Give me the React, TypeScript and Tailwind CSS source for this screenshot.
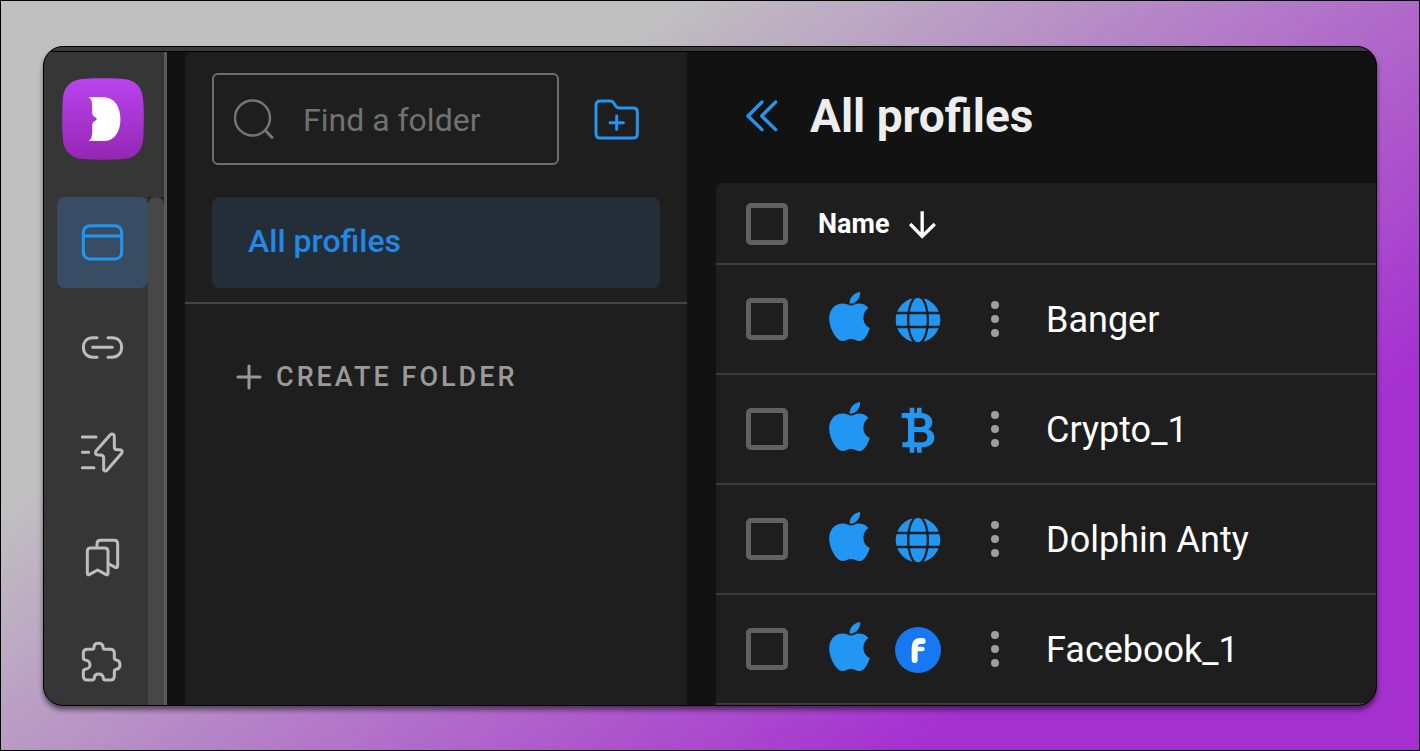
import type { ReactNode } from "react";

const navItems = [
  {
    label: "Browsers",
    active: true,
    viewBox: "132 540 135 135",
    icon: (
      <>
        <rect x="142" y="557" width="115" height="100" rx="20" />
        <path d="M142 588H257" />
      </>
    ),
  },
  {
    label: "Proxies",
    active: false,
    viewBox: "90 75 135 135",
    icon: (
      <path d="M141 113H129C110 113 100 126 100 142S110 172 129 172H141M174 113H186C205 113 215 126 215 142S205 172 186 172H174M128 142H187" />
    ),
  },
  {
    label: "Automation",
    active: false,
    viewBox: "90 390 135 135",
    icon: (
      <>
        <path d="M97 411H138M97 457H116M97 503H132" />
        <path d="M181 404Q186 400 191 404Q193 406 193 411V440Q193 449 202 449H209Q220 450 215 460L171 511Q165 516 161 510V474Q161 465 152 465H143Q133 463 138 453Z" />
      </>
    ),
  },
  {
    label: "Bookmarks",
    active: false,
    viewBox: "132 75 135 135",
    icon: (
      <>
        <path d="M154 190V124Q154 114 164 114H206Q216 114 216 124V190Q216 197 209 193L185 180L161 193Q154 197 154 190Z" />
        <path d="M183 112V102Q183 91 194 91H235Q245 91 245 102V168Q245 174 238 172L221 163" />
      </>
    ),
  },
  {
    label: "Extensions",
    active: false,
    viewBox: "132 390 135 135",
    icon: (
      <path d="M142 443V430Q142 418 154 418H168Q174 418 174 412C174 404 180 400 187 400C195 400 201 404 201 412Q201 418 207 418H223Q235 418 235 430V443Q235 449 241 450C248 451 252 457 252 464C252 471 248 477 241 478Q235 479 235 485V498Q235 510 223 510H208Q202 510 202 504C201 496 195 492 188 492C181 492 175 496 175 504Q174 510 168 510H154Q142 510 142 498V485Q142 479 148 478C156 477 162 471 162 464C162 457 156 451 148 450Q142 449 142 443Z" />
    ),
  },
];

const profiles = [
  { name: "Banger", site: "globe" },
  { name: "Crypto_1", site: "bitcoin" },
  { name: "Dolphin Anty", site: "globe" },
  { name: "Facebook_1", site: "facebook" },
] as const;

function Logo() {
  return (
    <svg viewBox="0 0 247 247" className="h-[82px] w-[82px]" aria-hidden>
      <defs>
        <linearGradient id="logo" x1="0" y1="0" x2="0" y2="1">
          <stop offset="0" stopColor="#b944ee" />
          <stop offset="1" stopColor="#9526b4" />
        </linearGradient>
      </defs>
      <path
        fill="url(#logo)"
        d="M72 2C100 0 147 0 175 2C222 4 243 25 245 72C247 100 247 147 245 175C243 222 222 243 175 245C147 247 100 247 72 245C25 243 4 222 2 175C0 147 0 100 2 72C4 25 25 4 72 2Z"
      />
      <path
        fill="#fff"
        d="M80 58H125C158 58 176 86 176 124S158 190 125 190H80C88 184 91 176 91 165V145C91 133 96 132 104 126V121C96 115 91 115 91 103V82C91 71 88 64 80 58Z"
      />
    </svg>
  );
}

function AppleIcon() {
  return (
    <svg viewBox="0 0 121 146" className="h-[49px] w-[41px] fill-[#2196f3]" aria-hidden>
      <path d="M66 40C58 40 52 34 40 34C18 34 0 52 0 78C0 106 20 145 40 146C50 146 54 140 65 140C76 140 80 146 92 146C104 146 116 124 121 107C110 103 102 92 102 77C102 64 108 54 117 48C110 38 98 34 90 34C79 34 72 40 66 40Z" />
      <path d="M92 0C94 18 80 36 61 35C59 20 72 2 92 0Z" />
    </svg>
  );
}

function GlobeIcon() {
  return (
    <svg viewBox="-69 -69 138 138" className="h-[46px] w-[46px]" aria-hidden>
      <circle r="67" fill="#2196f3" />
      <ellipse rx="33" ry="75" fill="#1e1e1e" />
      <ellipse rx="26" ry="67" fill="#2196f3" />
      <path d="M-69 -21H69M-69 21H69" stroke="#1e1e1e" strokeWidth="8" />
    </svg>
  );
}

function BitcoinIcon() {
  return (
    <svg viewBox="-20 -2 138 138" className="h-[46px] w-[46px] fill-[#2196f3]" aria-hidden>
      <path
        fillRule="evenodd"
        d="M0 16H24V0H38V16H46V0H60V16C80 18 92 28 92 44C92 54 87 61 79 65C91 69 98 77 98 90C98 108 84 118 60 119V135H46V119H38V135H24V119H2V104H12Q19 104 19 97V38Q19 31 12 31H0ZM38 31V58H54C66 58 71 54 71 45C71 35 66 31 54 31ZM38 73V104H58C71 104 77 98 77 88C77 78 71 73 58 73Z"
      />
    </svg>
  );
}

function FacebookIcon() {
  return (
    <svg viewBox="0 0 138 138" className="h-[46px] w-[46px]" aria-hidden>
      <circle cx="69" cy="69" r="69" fill="#1877f2" />
      <g fill="none" stroke="#fff" strokeLinecap="round">
        <path d="M59 99V62Q59 42 76 42H83" strokeWidth="18" />
        <path d="M62 66H82" strokeWidth="14" />
      </g>
    </svg>
  );
}

const siteIcons: Record<(typeof profiles)[number]["site"], ReactNode> = {
  globe: <GlobeIcon />,
  bitcoin: <BitcoinIcon />,
  facebook: <FacebookIcon />,
};

function Checkbox({ label }: { label: string }) {
  return (
    <input
      type="checkbox"
      aria-label={label}
      className="block h-[42px] w-[42px] appearance-none rounded-[5px] border-[5px] border-[#616161] checked:bg-[#2196f3]"
    />
  );
}

function Sidebar() {
  return (
    <aside className="flex shrink-0 flex-col border-r-[3px] border-[#5a5a5a] bg-[#363636] pt-[26px]">
      <a href="#home" aria-label="Home" className="ml-[18px]">
        <Logo />
      </a>
      <div className="mt-[37px] flex h-0 grow overflow-hidden pl-[13px]">
        <nav className="flex flex-col gap-[14px]">
          {navItems.map((item) => (
            <a
              key={item.label}
              href={`#${item.label.toLowerCase()}`}
              aria-label={item.label}
              className={`flex h-[91px] w-[91px] shrink-0 items-center justify-center rounded-lg ${
                item.active ? "bg-[#384d63] text-[#2196f3]" : "text-[#bdbdbd]"
              }`}
            >
              <svg
                viewBox={item.viewBox}
                className="h-[45px] w-[45px] fill-none stroke-current"
                strokeWidth="9"
                strokeLinecap="round"
                strokeLinejoin="round"
                aria-hidden
              >
                {item.icon}
              </svg>
            </a>
          ))}
        </nav>
        <div className="w-4 bg-[#262626]">
          <div className="h-full rounded-t-lg bg-[#474747]" />
        </div>
      </div>
    </aside>
  );
}

function FolderPanel() {
  return (
    <section className="ml-[18px] w-[502px] shrink-0 rounded-tl-lg bg-[#1e1e1e] pt-[21px]">
      <div className="flex items-center gap-[35px] pr-12 pl-[27px]">
        <label className="flex h-[92px] min-w-0 flex-1 items-center rounded-md border-2 border-[#6e6e6e] pl-5">
          <svg
            viewBox="0 0 40 40"
            className="h-10 w-10 shrink-0 fill-none stroke-[#757575]"
            strokeWidth="2.4"
            strokeLinecap="round"
            aria-hidden
          >
            <circle cx="18.500" cy="19" r="17.500" />
            <path d="M31.500 31.500L38 38.500" strokeWidth="3" />
          </svg>
          <input
            type="search"
            aria-label="Find a folder"
            placeholder="Find a folder"
            className="ml-[29px] w-full min-w-0 bg-transparent pt-0.5 text-[32px] leading-10 text-white outline-none placeholder:text-[#717171]"
          />
        </label>
        <button type="button" aria-label="New folder">
          <svg
            viewBox="191 113 135 129"
            className="h-[43px] w-[45px] fill-none stroke-[#2196f3]"
            strokeWidth="9"
            strokeLinecap="round"
            strokeLinejoin="round"
            aria-hidden
          >
            <path d="M197 135Q197 122 210 122H240Q247 122 250 128L256 137Q260 143 267 143H309Q321 143 321 155V220Q321 233 308 233H210Q197 233 197 220Z" />
            <path d="M259 167V207M239 187H279" />
          </svg>
        </button>
      </div>

      <div className="mt-8 border-b-2 border-[#454545] px-[27px] pb-[14px]">
        <a
          href="#all"
          className="flex h-[91px] items-center rounded-lg bg-[#242e38] pb-[3px] pl-9 text-[32px] font-medium text-[#2089e5]"
        >
          All profiles
        </a>
      </div>

      <button
        type="button"
        className="mt-[55px] ml-[51px] flex h-9 items-center gap-[14px] text-[27px] font-medium tracking-[3px] text-[#9a9a9a]"
      >
        <svg
          viewBox="0 0 26 26"
          className="h-[26px] w-[26px] stroke-current"
          strokeWidth="3"
          strokeLinecap="round"
          aria-hidden
        >
          <path d="M13 2V24M2 13H24" />
        </svg>
        CREATE FOLDER
      </button>
    </section>
  );
}

function ProfilesTable() {
  return (
    <div className="grow overflow-hidden rounded-tl-lg bg-[#1e1e1e]">
      <table className="w-full table-fixed border-separate border-spacing-0 text-left text-white">
        <colgroup>
          <col className="w-[102px]" />
          <col className="w-[148px]" />
          <col className="w-20" />
          <col />
        </colgroup>
        <thead>
          <tr>
            <th className="h-[82px] border-b-2 border-[#3a3a3a] p-0 pt-0.5 pl-[30px]">
              <Checkbox label="Select all profiles" />
            </th>
            <th colSpan={3} className="border-b-2 border-[#3a3a3a] p-0 pt-0.5">
              <button type="button" className="flex items-center gap-5 text-[27px] font-bold">
                Name
                <svg
                  viewBox="598 124 80 84"
                  className="mt-0.5 h-7 w-[27px] fill-none stroke-current"
                  strokeWidth="10"
                  aria-hidden
                >
                  <path d="M637 125V198M601 163L637 200L675 163" />
                </svg>
              </button>
            </th>
          </tr>
        </thead>
        <tbody>
          {profiles.map((profile) => (
            <tr key={profile.name}>
              <td className="h-[110px] border-b-2 border-[#3a3a3a] p-0 pl-[30px]">
                <Checkbox label={`Select ${profile.name}`} />
              </td>
              <td className="border-b-2 border-[#3a3a3a] p-0 pb-1 pl-[11px]">
                <div className="flex items-end gap-[25px]">
                  <div className="pb-0.5">
                    <AppleIcon />
                  </div>
                  {siteIcons[profile.site]}
                </div>
              </td>
              <td className="border-b-2 border-[#3a3a3a] p-0">
                <button
                  type="button"
                  aria-label={`Actions for ${profile.name}`}
                  className="flex w-[58px] flex-col items-center gap-[6px]"
                >
                  <span className="h-2 w-2 rounded-full bg-[#9e9e9e]" />
                  <span className="h-2 w-2 rounded-full bg-[#9e9e9e]" />
                  <span className="h-2 w-2 rounded-full bg-[#9e9e9e]" />
                </button>
              </td>
              <td className="border-b-2 border-[#3a3a3a] p-0 pt-0.5 text-4xl">{profile.name}</td>
            </tr>
          ))}
        </tbody>
      </table>
    </div>
  );
}

export default function App() {
  return (
    <div className="flex min-h-dvh border border-black bg-linear-[143deg] from-[#c0c0c0] from-28% to-[#a530d0] to-79% px-[42px] pt-[45px] pb-11 font-[Roboto,sans-serif]">
      <div className="flex min-w-0 grow flex-col overflow-hidden rounded-[20px] border border-black bg-[#121212] shadow-[0_4px_5px_rgba(0,0,0,0.5)]">
        <div className="h-[5px] border-b border-black bg-[#3a3a3a]" />
        <div className="flex grow">
          <Sidebar />
          <FolderPanel />
          <main className="flex min-w-0 grow flex-col pl-[29px]">
            <div className="flex h-[131px] shrink-0 items-center gap-8 pb-[3px] pl-[30px]">
              <button type="button" aria-label="Collapse folders">
                <svg
                  viewBox="649 123 96 96"
                  className="h-8 w-8 fill-none stroke-[#2196f3]"
                  strokeWidth="10"
                  strokeLinecap="round"
                  strokeLinejoin="round"
                  aria-hidden
                >
                  <path d="M697 129L655 171L697 212M738 129L696 171L738 212" />
                </svg>
              </button>
              <h1 className="text-[46px] leading-none font-bold text-[#ededed]">All profiles</h1>
            </div>
            <ProfilesTable />
          </main>
        </div>
      </div>
    </div>
  );
}
